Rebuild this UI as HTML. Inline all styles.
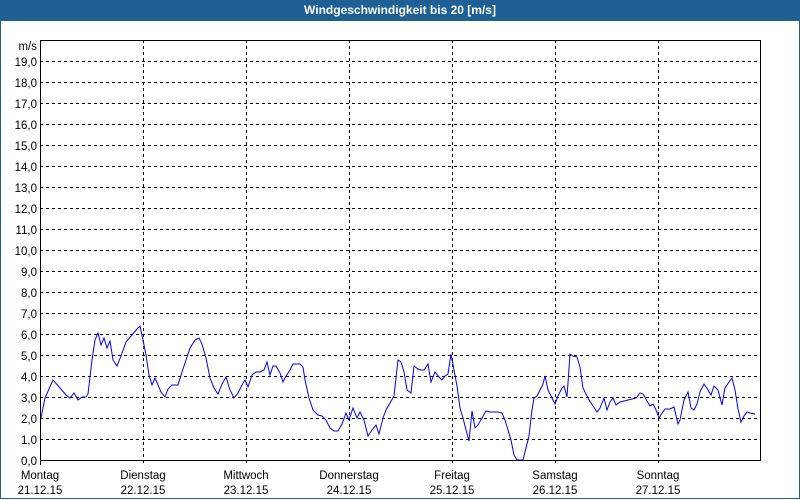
<!DOCTYPE html>
<html><head><style>
body{margin:0;width:800px;height:500px;background:#fff;position:relative;overflow:hidden;font-family:"Liberation Sans",Tahoma,sans-serif}
#frame{position:absolute;left:0;top:0;width:798px;height:498px;border:1px solid #1e6096;border-top:none}
#title{position:absolute;left:0;top:0;width:800px;height:21px;background:#1e6096;color:#fff;font-weight:bold;font-size:12px;line-height:21px;text-align:center}
svg{position:absolute;left:0;top:0}
text{font-family:"Liberation Sans",Tahoma,sans-serif;font-size:11.5px;fill:#000}
</style></head><body>
<div id="frame"></div>
<div id="title">Windgeschwindigkeit bis 20 [m/s]</div>
<svg width="800" height="500">
<g stroke="#000" stroke-width="1" stroke-dasharray="3,3" shape-rendering="crispEdges">
<line x1="40" x2="760" y1="439.5" y2="439.5"/><line x1="40" x2="760" y1="418.5" y2="418.5"/><line x1="40" x2="760" y1="397.5" y2="397.5"/><line x1="40" x2="760" y1="376.5" y2="376.5"/><line x1="40" x2="760" y1="355.5" y2="355.5"/><line x1="40" x2="760" y1="334.5" y2="334.5"/><line x1="40" x2="760" y1="313.5" y2="313.5"/><line x1="40" x2="760" y1="292.5" y2="292.5"/><line x1="40" x2="760" y1="271.5" y2="271.5"/><line x1="40" x2="760" y1="250.5" y2="250.5"/><line x1="40" x2="760" y1="229.5" y2="229.5"/><line x1="40" x2="760" y1="208.5" y2="208.5"/><line x1="40" x2="760" y1="187.5" y2="187.5"/><line x1="40" x2="760" y1="166.5" y2="166.5"/><line x1="40" x2="760" y1="145.5" y2="145.5"/><line x1="40" x2="760" y1="124.5" y2="124.5"/><line x1="40" x2="760" y1="103.5" y2="103.5"/><line x1="40" x2="760" y1="82.5" y2="82.5"/><line x1="40" x2="760" y1="61.5" y2="61.5"/>
<line x1="143.5" x2="143.5" y1="40" y2="465"/><line x1="246.5" x2="246.5" y1="40" y2="465"/><line x1="349.5" x2="349.5" y1="40" y2="465"/><line x1="452.5" x2="452.5" y1="40" y2="465"/><line x1="555.5" x2="555.5" y1="40" y2="465"/><line x1="658.5" x2="658.5" y1="40" y2="465"/>
</g>
<g stroke="#000" fill="none" shape-rendering="crispEdges">
<rect x="40.5" y="40.5" width="720" height="420"/>
<line x1="40.5" x2="40.5" y1="460" y2="465"/>
</g>
<polyline fill="none" stroke="#0000ff" stroke-width="1" points="41,418 45,398 53,380 60,388 66,395 70,398 74,393 78,400 82,397 86,397 88,394 92,360 95,340 98,333 101,345 104,338 107,348 110,341 113,360 117,366 121,356 126,342 132,335 137,329 140,326 143,340 146,355 149,375 152,385 155,378 158,385 161,392 165,397 168,389 172,385 178,385 182,372 186,360 190,348 195,340 199,338 202,344 206,358 210,378 214,388 218,394 222,384 226,377 230,390 234,398 238,393 242,385 245,380 248,387 252,375 256,372 260,372 264,370 267,362 270,375 273,366 276,366 280,373 283,382 286,376 290,370 293,364 297,364 300,364 303,367 305,380 309,398 313,410 318,415 322,416 326,420 330,428 334,431 338,431 342,424 346,413 349,420 353,408 357,418 360,412 364,420 368,436 372,430 376,425 379,434 383,418 386,410 390,403 394,396 398,360 401,362 404,372 407,390 411,393 414,366 418,369 421,370 424,370 428,364 431,382 435,372 439,377 442,380 445,376 448,374 451,354 454,370 457,386 460,408 463,418 466,430 469,441 472,411 475,428 478,425 482,418 486,411 490,412 494,412 498,412 502,413 505,420 508,430 511,440 514,455 517,460 520,460 523,460 526,448 529,436 532,410 534,398 537,396 540,390 543,384 545,376 548,390 552,398 555,404 558,396 562,388 564,386 567,397 570,354 573,356 577,357 580,367 583,388 586,394 589,400 593,406 597,412 600,408 604,398 607,410 610,402 613,398 616,405 620,402 624,401 628,400 632,399 636,398 640,393 643,394 647,401 650,406 653,404 656,410 659,418 662,413 665,409 670,409 674,407 678,424 680,420 684,400 688,392 691,408 694,410 697,404 700,392 704,384 708,390 711,395 714,386 718,390 722,405 725,388 729,382 732,378 735,390 738,409 741,422 744,416 747,412 750,413 755,414"/>
<g text-anchor="end">
<text x="37" y="50">m/s</text>
<text x="37" y="66">19,0</text><text x="37" y="87">18,0</text><text x="37" y="108">17,0</text><text x="37" y="129">16,0</text><text x="37" y="150">15,0</text><text x="37" y="171">14,0</text><text x="37" y="192">13,0</text><text x="37" y="213">12,0</text><text x="37" y="234">11,0</text><text x="37" y="255">10,0</text><text x="37" y="276">9,0</text><text x="37" y="297">8,0</text><text x="37" y="318">7,0</text><text x="37" y="339">6,0</text><text x="37" y="360">5,0</text><text x="37" y="381">4,0</text><text x="37" y="402">3,0</text><text x="37" y="423">2,0</text><text x="37" y="444">1,0</text><text x="37" y="465">0,0</text>
</g>
<g text-anchor="middle">
<text x="40" y="479">Montag</text><text x="40" y="494">21.12.15</text>
<text x="143" y="479">Dienstag</text><text x="143" y="494">22.12.15</text>
<text x="246" y="479">Mittwoch</text><text x="246" y="494">23.12.15</text>
<text x="349" y="479">Donnerstag</text><text x="349" y="494">24.12.15</text>
<text x="452" y="479">Freitag</text><text x="452" y="494">25.12.15</text>
<text x="555" y="479">Samstag</text><text x="555" y="494">26.12.15</text>
<text x="658" y="479">Sonntag</text><text x="658" y="494">27.12.15</text>
</g>
</svg>
</body></html>
